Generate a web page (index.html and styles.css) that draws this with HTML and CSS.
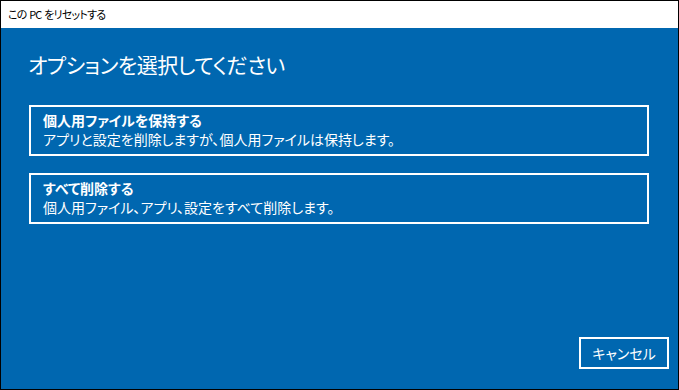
FILE: index.html
```html
<!DOCTYPE html>
<html>
<head>
<meta charset="UTF-8">
  <link rel="stylesheet" href="styles.css">
  <title>この PC をリセットする</title>
</head>
<body>
<div class="window">
  <div class="titlebar">この PC をリセットする</div>
  <div class="content">
    <h1 class="heading">オプションを選択してください</h1>
    <div class="option">
      <div class="option-title">個人用ファイルを保持する</div>
      <div class="option-desc">アプリと設定を削除しますが、個人用ファイルは保持します。</div>
    </div>
    <div class="option">
      <div class="option-title">すべて削除する</div>
      <div class="option-desc">個人用ファイル、アプリ、設定をすべて削除します。</div>
    </div>
    <div class="footer">
      <div class="cancel">キャンセル</div>
    </div>
  </div>
</div>
</body>
</html>
```

FILE: styles.css
```css
body
{
  margin: 0;
  font-family: "Noto Sans CJK JP", "Noto Sans", sans-serif;
  font-feature-settings: "palt";
}
.window
{
  width: 679px;
  height: 390px;
  box-sizing: border-box;
  border: 1px solid #000;
  display: flex;
  flex-direction: column;
}
.titlebar
{
  height: 27px;
  line-height: 27px;
  padding-left: 7px;
  font-size: 11px;
  letter-spacing: -0.8px;
  word-spacing: 1px;
  color: #000;
  background-color: #fff;
}
.content
{
  flex: 1;
  display: flex;
  flex-direction: column;
  background-color: #0067b0;
  color: #fff;
  padding: 21px 29px 20px 28px;
}
.heading
{
  margin: 0 0 26px -1px;
  font-size: 21px;
  font-weight: 400;
  letter-spacing: -0.5px;
  line-height: 30px;
}
.option
{
  border: 2px solid #fff;
  padding: 4px 12px 5px 12px;
  margin-bottom: 17px;
  font-size: 14px;
  line-height: 19px;
}
.option-title
{
  font-weight: 700;
}
.footer
{
  margin-top: auto;
  display: flex;
  justify-content: flex-end;
  margin-right: -20px;
}
.cancel
{
  width: 86px;
  height: 28px;
  line-height: 28px;
  border: 2px solid #fff;
  text-align: center;
  font-size: 14px;
}
```
